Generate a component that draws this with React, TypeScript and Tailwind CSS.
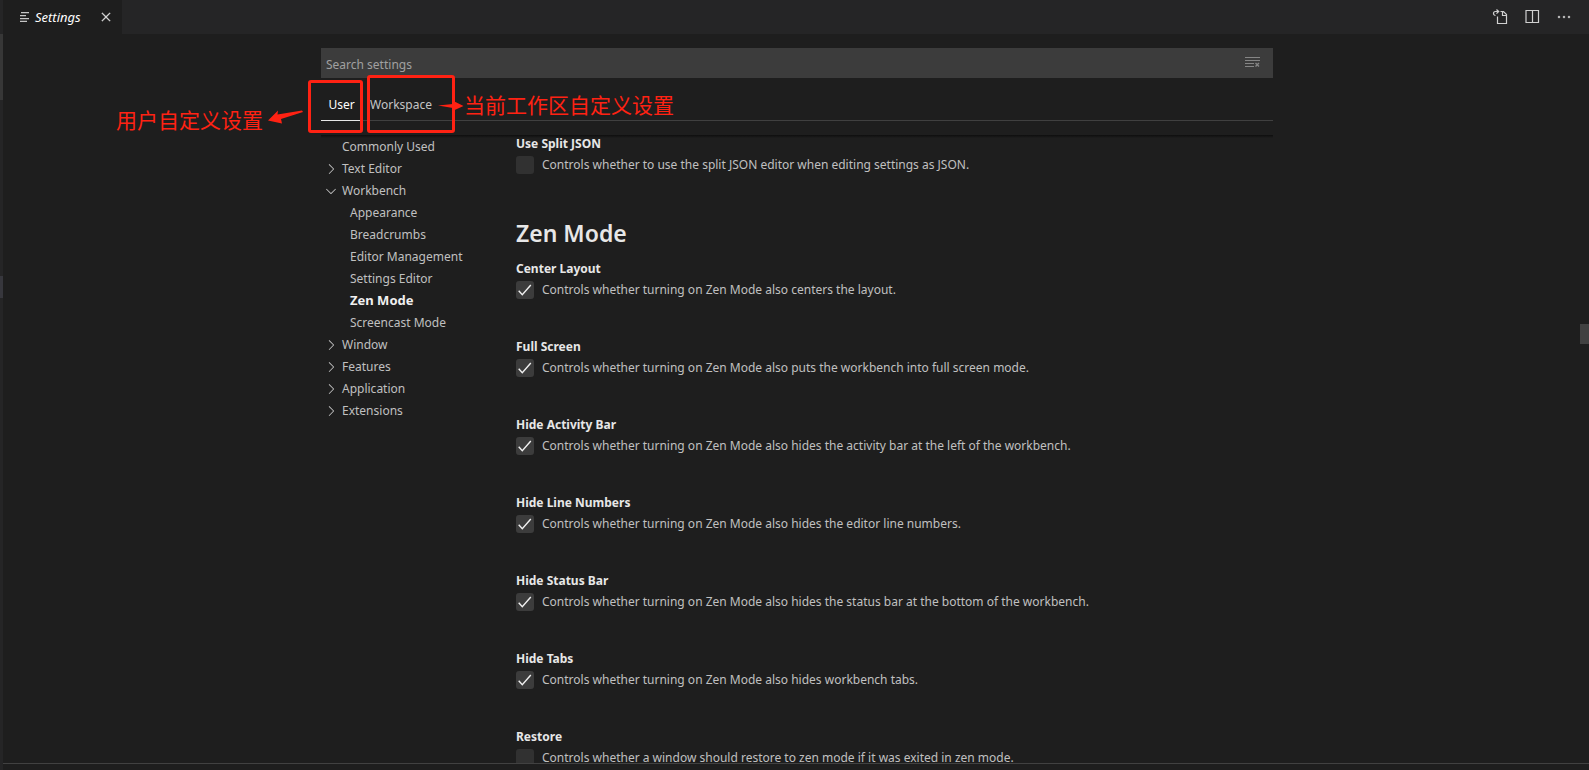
import { useState } from "react";
import { VscChevronDown, VscChevronRight, VscClose, VscEllipsis } from "react-icons/vsc";

type Setting = { id: string; title: string; text: string; on: boolean };

const splitJson: Setting = {
  id: "split-json",
  title: "Use Split JSON",
  text: "Controls whether to use the split JSON editor when editing settings as JSON.",
  on: false,
};

const zenSettings: Setting[] = [
  { id: "center-layout", title: "Center Layout", text: "Controls whether turning on Zen Mode also centers the layout.", on: true },
  { id: "full-screen", title: "Full Screen", text: "Controls whether turning on Zen Mode also puts the workbench into full screen mode.", on: true },
  { id: "hide-activity", title: "Hide Activity Bar", text: "Controls whether turning on Zen Mode also hides the activity bar at the left of the workbench.", on: true },
  { id: "hide-lines", title: "Hide Line Numbers", text: "Controls whether turning on Zen Mode also hides the editor line numbers.", on: true },
  { id: "hide-status", title: "Hide Status Bar", text: "Controls whether turning on Zen Mode also hides the status bar at the bottom of the workbench.", on: true },
  { id: "hide-tabs", title: "Hide Tabs", text: "Controls whether turning on Zen Mode also hides workbench tabs.", on: true },
  { id: "restore", title: "Restore", text: "Controls whether a window should restore to zen mode if it was exited in zen mode.", on: false },
];

type TocEntry = { label: string; kind: "leaf" | "closed" | "open" | "child"; current?: boolean };

const toc: TocEntry[] = [
  { label: "Commonly Used", kind: "leaf" },
  { label: "Text Editor", kind: "closed" },
  { label: "Workbench", kind: "open" },
  { label: "Appearance", kind: "child" },
  { label: "Breadcrumbs", kind: "child" },
  { label: "Editor Management", kind: "child" },
  { label: "Settings Editor", kind: "child" },
  { label: "Zen Mode", kind: "child", current: true },
  { label: "Screencast Mode", kind: "child" },
  { label: "Window", kind: "closed" },
  { label: "Features", kind: "closed" },
  { label: "Application", kind: "closed" },
  { label: "Extensions", kind: "closed" },
];

function SettingItem({ item }: { item: Setting }) {
  const [on, setOn] = useState(item.on);
  return (
    <div className="pb-[38px]">
      <h3 className="leading-5 font-bold text-[#e7e7e7]">{item.title}</h3>
      <label htmlFor={item.id} className="mt-0.5 flex h-[18px] items-start gap-2">
        <span className="relative size-[18px] shrink-0">
          <input
            id={item.id}
            type="checkbox"
            checked={on}
            onChange={() => setOn(!on)}
            className="block size-[18px] appearance-none rounded-[3px] bg-[#313131] checked:bg-[#3c3c3c]"
          />
          {on && (
            <svg
              className="pointer-events-none absolute inset-0"
              width="18"
              height="18"
              viewBox="0 0 18 18"
              fill="none"
              stroke="#f0f0f0"
              strokeWidth="1.4"
            >
              <path d="M2.700 9.700 6.300 13.800 14.800 4" />
            </svg>
          )}
        </span>
        <span className="leading-[18px] whitespace-nowrap text-[#c0c0c0]">{item.text}</span>
      </label>
    </div>
  );
}

function TocRow({ entry }: { entry: TocEntry }) {
  return (
    <li>
      <button
        className={`flex h-[22px] w-full items-center text-left whitespace-nowrap ${entry.kind === "child" ? "pl-[29px]" : "pl-[2px]"} ${entry.current ? "text-[13px] font-bold text-[#f0f0f0]" : "text-[#c0c0c0]"}`}
      >
        {entry.kind !== "child" && (
          <span className="mr-[3px] size-4 shrink-0">
            {entry.kind === "closed" && <VscChevronRight className="size-4" />}
            {entry.kind === "open" && <VscChevronDown className="size-4" />}
          </span>
        )}
        {entry.label}
      </button>
    </li>
  );
}

function Annotations() {
  return (
    <div className="pointer-events-none text-[21px] leading-[30px] whitespace-nowrap text-[#ff2213] font-['Noto_Sans_CJK_SC',sans-serif]">
      <div className="absolute top-[46px] -left-[13px] h-[53px] w-[55px] rounded-[3px] border-3 border-[#ff2213]" />
      <div className="absolute top-[41px] left-[46px] h-[58px] w-[88px] rounded-[3px] border-3 border-[#ff2213]" />
      <span className="absolute top-[70px] -left-[205px]">用户自定义设置</span>
      <span className="absolute top-[55px] left-[143px]">当前工作区自定义设置</span>
      <svg className="absolute top-[74px] -left-[53px]" width="36" height="18" viewBox="0 0 36 18" fill="currentColor">
        <path d="M0 12.500 10 2.500 9.500 6.500 34 2.500 35 4 13 11 14 15.500Z" />
      </svg>
      <svg className="absolute top-[66px] left-[117px]" width="26" height="12" viewBox="0 0 26 12" fill="currentColor">
        <path d="M0 5.500 15 4 14.500 0.500 25.500 6 14.500 11 15 8Z" />
      </svg>
    </div>
  );
}

export default function App() {
  return (
    <div className="flex h-screen overflow-hidden bg-[#1e1e1e] text-[12px] font-['Noto_Sans',sans-serif]">
      <aside className="flex w-[3px] shrink-0 flex-col bg-[#252526]">
        <div className="mt-[34px] h-[66px] bg-[#373737]" />
        <div className="mt-[176px] h-[22px] bg-[#37373d]" />
      </aside>
      <div className="flex min-w-0 flex-1 flex-col">
        <header className="flex h-[34px] shrink-0 items-center justify-between bg-[#252526]">
          <div className="flex h-full w-[119px] items-center bg-[#1e1e1e] pl-[17px] text-white">
            <svg width="10" height="10" viewBox="0 0 10 10" fill="#c5c5c5" className="mr-[5px]">
              <path d="M1 0h8v1.300H1zM0 3h6v1.300H0zM0 6h9v1.300H0zM0 8.700h7V10H0z" />
            </svg>
            <span className="flex-1 pt-px text-[13px] italic">Settings</span>
            <button aria-label="Close" className="mr-2 text-[#e0e0e0]">
              <VscClose className="size-4" stroke="currentColor" strokeWidth="0.3" />
            </button>
          </div>
          <div className="flex items-center gap-4 pr-[17px] text-[#d0d0d0]">
            <button aria-label="Open Settings (JSON)">
              <svg width="16" height="16" viewBox="0 0 16 16" fill="none" stroke="currentColor" strokeWidth="1.2">
                <path d="M5.500 7.500v7h9v-9l-3-3H8.500M10.500 2.500v4h4M4.500 .500l2.200 2-2.200 2.200M6.700 2.500H3.500c-1.500 0-2 1-2 2s1 2 2 2" />
              </svg>
            </button>
            <button aria-label="Split Editor">
              <svg width="16" height="16" viewBox="0 0 16 16" fill="none" stroke="currentColor" strokeWidth="1.2">
                <path d="M2 1.500h12.500v12H2zM8.500 1.500v12" />
              </svg>
            </button>
            <button aria-label="More Actions">
              <VscEllipsis className="size-4" stroke="currentColor" strokeWidth="0.4" />
            </button>
          </div>
        </header>

        <main className="relative flex min-h-0 flex-1 flex-col pl-[2px]">
          <div className="mx-auto flex min-h-0 w-full max-w-[1000px] flex-1 flex-col px-6">
            <section className="relative z-10 h-[100px] shrink-0 pt-[14px]">
              <div className="flex h-[30px] items-center bg-[#3c3c3c] pr-3 pl-[5px]">
                <input
                  type="text"
                  aria-label="Search settings"
                  placeholder="Search settings"
                  className="min-w-0 flex-1 bg-transparent pt-1 outline-none placeholder:text-[#a0a0a0]"
                />
                <button aria-label="Clear Search" className="text-[#868686]">
                  <svg width="16" height="16" viewBox="0 0 16 16" fill="none" stroke="currentColor">
                    <path d="M0 2.500h15M0 5.500h15M0 8.500h9M0 11.500h9" />
                    <path d="M10.500 8l3.500 3.500M14 8l-3.500 3.500" strokeWidth="1.4" />
                  </svg>
                </button>
              </div>
              <nav className="mt-[11px] flex h-[32px] border-b border-[#404040]">
                <button className="-mb-px w-[39px] border-b border-[#e7e7e7] pl-[2px] text-center text-white">User</button>
                <button className="ml-[10px] text-[#c5c5c5]">Workspace</button>
              </nav>
              <Annotations />
            </section>

            <div className="relative flex min-h-0 flex-1 overflow-hidden">
              <div className="pointer-events-none absolute inset-x-0 top-px z-10 h-[3px] bg-gradient-to-b from-[#0e0e0e] to-[#1e1e1e]" />
              <ul className="w-[195px] shrink-0 pt-[2px]">
                {toc.map((entry) => (
                  <TocRow key={entry.label} entry={entry} />
                ))}
              </ul>
              <div className="min-w-0 flex-1">
                <SettingItem item={splitJson} />
                <h2 className="h-[47px] text-[23px] leading-[42px] font-semibold text-[#e7e7e7]">Zen Mode</h2>
                {zenSettings.map((item) => (
                  <SettingItem key={item.id} item={item} />
                ))}
              </div>
            </div>
          </div>
          <div className="absolute top-[290px] right-0 h-5 w-[9px] bg-[#414141]" />
        </main>
        <footer className="h-[7px] shrink-0 border-t border-[#414141]" />
      </div>
    </div>
  );
}
